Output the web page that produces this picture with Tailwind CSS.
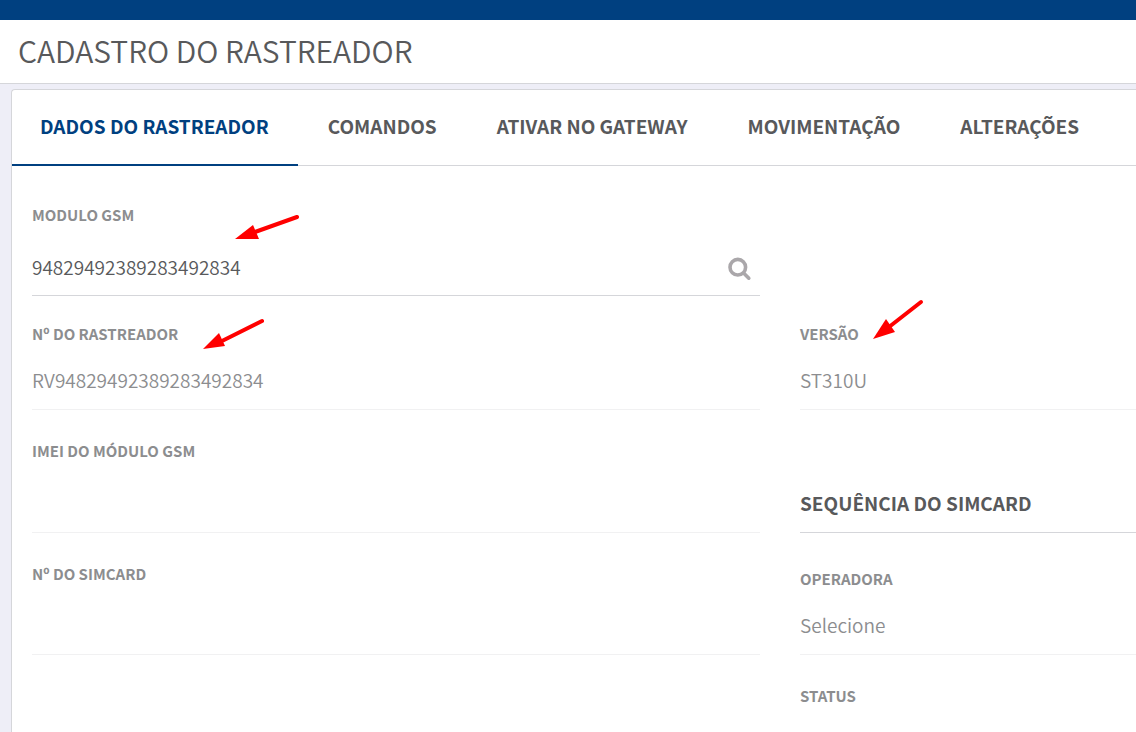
<!DOCTYPE html>
<html lang="pt-BR">
<head>
    <meta charset="UTF-8" />
    <meta name="viewport" content="width=device-width, initial-scale=1" />
    <title>Cadastro do Rastreador</title>
    <script src="https://cdn.jsdelivr.net/npm/@tailwindcss/browser@4"></script>
</head>
<body class="h-screen overflow-hidden flex flex-col bg-[#eeeef7] font-['Noto_Sans_CJK_SC',sans-serif] text-[#58595b]">

    <div class="h-5 shrink-0 bg-[#004080]"></div>

    <header class="h-16 shrink-0 px-[18px] pt-3 bg-white border-b border-[#d5d6da]">
        <h1 class="text-[30px] leading-9 font-[350]">CADASTRO DO RASTREADOR</h1>
    </header>

    <main class="grow min-h-0 overflow-hidden mt-[5px] ml-[11px] bg-white border-l border-t border-[#d5d6da] rounded-tl">
        <nav class="flex h-[76px] border-b border-[#d5d6da] text-[19px] leading-6 font-bold whitespace-nowrap">
            <a href="#dados" class="pl-7 pr-[29px] pt-6 -mb-px border-b-2 border-[#004080] text-[#004080]">DADOS DO RASTREADOR</a>
            <a href="#comandos" class="px-[30px] pt-6">COMANDOS</a>
            <a href="#gateway" class="px-[30px] pt-6">ATIVAR NO GATEWAY</a>
            <a href="#movimentacao" class="px-[30px] pt-6">MOVIMENTAÇÃO</a>
            <a href="#alteracoes" class="px-[30px] pt-6">ALTERAÇÕES</a>
        </nav>

        <form class="pl-5 grid grid-cols-[13fr_6fr] grid-rows-[130px_114px_123px_122px_auto] gap-x-10 items-end text-[19px] font-[350] text-[#8c8d8f]">
            <!-- Módulo GSM -->
            <div class="relative">
                <label for="modulo" class="block text-[15px] leading-5 font-bold">MODULO GSM</label>
                <div class="flex items-center h-[71px] pt-3.5 pr-2 border-b border-[#d5d6da]">
                    <input id="modulo" type="text" value="94829492389283492834" class="grow min-w-0 text-[#58595b] outline-none" />
                    <button type="button" aria-label="Pesquisar" class="size-6 mt-1">
                        <svg viewBox="0 0 24 24" class="size-6" fill="none" stroke="#aaa7aa" stroke-width="3.6">
                            <circle cx="9.8" cy="10.2" r="7.8" />
                            <path d="M15.8 16.2l5 5" stroke-linecap="round" />
                        </svg>
                    </button>
                </div>
                <svg viewBox="0 0 68 30" class="absolute left-[202px] top-2 w-[68px] h-[30px]">
                    <path d="M21 19L63 4" stroke="#f00" stroke-width="4" stroke-linecap="round" />
                    <path d="M1 26L19 12L25 26Z" fill="#f00" />
                </svg>
            </div>
            <div></div>

            <!-- Rastreador -->
            <div class="relative">
                <label for="numero" class="block text-[15px] leading-5 font-bold">Nº DO RASTREADOR</label>
                <input id="numero" type="text" value="RV94829492389283492834" readonly class="block w-full h-[66px] pt-1.5 border-b border-[#f1f1f2] outline-none" />
                <svg viewBox="0 0 68 36" class="absolute left-[170px] -top-2 w-[68px] h-[36px]">
                    <path d="M20 25L60 5" stroke="#f00" stroke-width="4" stroke-linecap="round" />
                    <path d="M1 33L17 17L23 30Z" fill="#f00" />
                </svg>
            </div>
            <div class="relative">
                <label for="versao" class="block text-[15px] leading-5 font-bold">VERSÃO</label>
                <input id="versao" type="text" value="ST310U" readonly class="block w-full h-[66px] pt-1.5 border-b border-[#f1f1f2] outline-none" />
                <svg viewBox="0 0 56 44" class="absolute left-[72px] -top-7 w-[56px] h-[44px]">
                    <path d="M17 31L49 6" stroke="#f00" stroke-width="4" stroke-linecap="round" />
                    <path d="M1 43L14 23L23 36Z" fill="#f00" />
                </svg>
            </div>

            <div>
                <label for="imei" class="block text-[15px] leading-5 font-bold">IMEI DO MÓDULO GSM</label>
                <input id="imei" type="text" readonly class="block w-full h-[72px] border-b border-[#f1f1f2] outline-none" />
            </div>
            <h2 class="h-[42px] leading-6 font-bold text-[#58595b] border-b border-[#d5d6da]">SEQUÊNCIA DO SIMCARD</h2>

            <!-- Simcard -->
            <div>
                <label for="simcard" class="block text-[15px] leading-5 font-bold">Nº DO SIMCARD</label>
                <input id="simcard" type="text" readonly class="block w-full h-[71px] border-b border-[#f1f1f2] outline-none" />
            </div>
            <div>
                <label for="operadora" class="block text-[15px] leading-5 font-bold">OPERADORA</label>
                <select id="operadora" class="block w-full h-[66px] pt-2 border-b border-[#f1f1f2] appearance-none outline-none">
                    <option>Selecione</option>
                </select>
            </div>

            <div></div>
            <div class="pt-[31px]">
                <label for="status" class="block text-[15px] leading-5 font-bold">STATUS</label>
                <select id="status" class="block w-full h-[66px] pt-2 border-b border-[#f1f1f2] appearance-none outline-none">
                    <option>Selecione</option>
                </select>
            </div>
        </form>
    </main>
</body>
</html>
